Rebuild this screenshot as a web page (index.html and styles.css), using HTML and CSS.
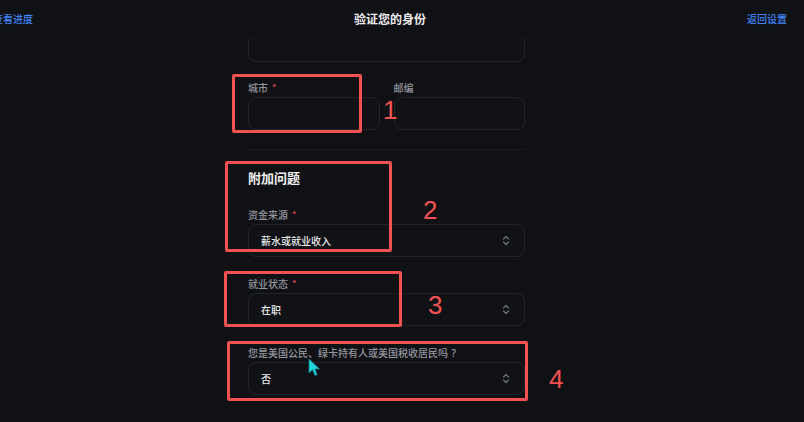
FILE: index.html
```html
<!DOCTYPE html>
<html lang="zh-CN">
<head>
<meta charset="utf-8">
<title>验证您的身份</title>
<link rel="stylesheet" href="styles.css">
</head>
<body>
<div class="page">
  <header class="topbar">
    <a class="link link-left" href="#">查看进度</a>
    <h1 class="title">验证您的身份</h1>
    <a class="link" href="#">返回设置</a>
  </header>
  <main class="main">
    <form class="form">
      <div class="field field-partial">
        <div class="input"></div>
      </div>
      <div class="row">
        <div class="field">
          <label class="label">城市<span class="req">*</span></label>
          <div class="input"></div>
        </div>
        <div class="field">
          <label class="label">邮编</label>
          <div class="input"></div>
        </div>
      </div>
      <hr class="divider">
      <h2 class="section">附加问题</h2>
      <div class="field">
        <label class="label">资金来源<span class="req">*</span></label>
        <div class="input select"><span class="value">薪水或就业收入</span>
          <svg class="chev" width="8" height="11" viewBox="0 0 8 11"><path d="M1.5 4 L4 1.5 L6.5 4 M1.5 7 L4 9.5 L6.5 7" fill="none" stroke="#6d7078" stroke-width="1.3" stroke-linecap="round" stroke-linejoin="round"/></svg>
        </div>
      </div>
      <div class="field">
        <label class="label">就业状态<span class="req">*</span></label>
        <div class="input select"><span class="value">在职</span>
          <svg class="chev" width="8" height="11" viewBox="0 0 8 11"><path d="M1.5 4 L4 1.5 L6.5 4 M1.5 7 L4 9.5 L6.5 7" fill="none" stroke="#6d7078" stroke-width="1.3" stroke-linecap="round" stroke-linejoin="round"/></svg>
        </div>
      </div>
      <div class="field">
        <label class="label">您是美国公民、绿卡持有人或美国税收居民吗<span class="qm">？</span></label>
        <div class="input select"><span class="value">否</span>
          <svg class="chev" width="8" height="11" viewBox="0 0 8 11"><path d="M1.5 4 L4 1.5 L6.5 4 M1.5 7 L4 9.5 L6.5 7" fill="none" stroke="#6d7078" stroke-width="1.3" stroke-linecap="round" stroke-linejoin="round"/></svg>
        </div>
      </div>
    </form>
  </main>

  <div class="mark mark-1"></div>
  <div class="mark mark-2"></div>
  <div class="mark mark-3"></div>
  <div class="mark mark-4"></div>
  <span class="num num-1">1</span>
  <span class="num num-2">2</span>
  <span class="num num-3">3</span>
  <span class="num num-4">4</span>
  <svg class="cursor" width="13" height="19" viewBox="0 0 13 19"><path d="M1 1 L1 15 L4.5 11.8 L7 17.5 L9.2 16.6 L6.8 11 L11.5 11 Z" fill="#23d9e0" stroke="#0e7f86" stroke-width="0.8" stroke-linejoin="round"/></svg>
</div>
</body>
</html>
```

FILE: styles.css
```css
* { box-sizing: border-box; }
html, body {
  margin: 0;
  padding: 0;
  background: #101115;
}
body {
  font-family: "Noto Sans CJK SC", "Noto Sans", sans-serif;
  color: #e6e7ea;
}
.page {
  position: relative;
  width: 804px;
  height: 422px;
  overflow: hidden;
}
.topbar {
  height: 39px;
  display: flex;
  align-items: center;
  justify-content: space-between;
  padding: 0 17px 0 0;
  border-bottom: 1px solid #131418;
  position: relative;
  z-index: 2;
  background: #101115;
}
.link {
  color: #3f84f4;
  font-size: 10px;
  font-weight: 500;
  text-decoration: none;
  line-height: 14px;
}
.link-left { margin-left: -7px; }
.title {
  margin: 0;
  font-size: 12px;
  font-weight: 600;
  color: #ececee;
  line-height: 16px;
}
.main {
  display: flex;
  justify-content: center;
  padding-right: 31px;
}
.form {
  width: 277px;
  display: flex;
  flex-direction: column;
}
.field {
  display: flex;
  flex-direction: column;
  margin-bottom: 20px;
}
.field-partial {
  margin-top: -10px;
  margin-bottom: 19px;
}
.row {
  display: grid;
  grid-template-columns: 1fr 1fr;
  column-gap: 14px;
}
.row .field { margin-bottom: 0; }
.label {
  font-size: 10px;
  line-height: 14px;
  color: #94969e;
  font-weight: 500;
  margin-bottom: 2px;
}
.qm {
  margin-left: 3px;
}
.req {
  color: #e5484d;
  margin-left: 4px;
  font-size: 9px;
  vertical-align: 1px;
}
.input {
  height: 33px;
  border: 1px solid #22242a;
  border-radius: 8px;
  background: #111216;
}
.select {
  display: flex;
  align-items: center;
  justify-content: space-between;
  padding: 0 14px 0 12px;
}
.value {
  font-size: 10px;
  color: #e9eaec;
  font-weight: 500;
}
.chev { display: block; }
.divider {
  border: 0;
  height: 1px;
  background: #1c1d22;
  margin: 19px 0 19px;
  width: 100%;
}
.section {
  margin: 0 0 21px;
  font-size: 13px;
  line-height: 18px;
  font-weight: 700;
  color: #f1f1f3;
}

/* annotation overlays */
.mark {
  position: absolute;
  border: 3px solid #f35252;
  border-radius: 2px;
  z-index: 5;
}
.mark-1 { left: 232px; top: 74px; width: 130px; height: 59px; }
.mark-2 { left: 225px; top: 161px; width: 167px; height: 91px; }
.mark-3 { left: 224px; top: 271px; width: 178px; height: 56px; }
.mark-4 { left: 227px; top: 341px; width: 301px; height: 60px; }
.num {
  position: absolute;
  font-family: "Liberation Sans", Arial, sans-serif;
  font-size: 26px;
  line-height: 1;
  color: #f35252;
  z-index: 5;
}
.num-1 { left: 383px; top: 97px; }
.num-2 { left: 423px; top: 197px; }
.num-3 { left: 428px; top: 292px; }
.num-4 { left: 549px; top: 366px; }
.cursor {
  position: absolute;
  left: 308px;
  top: 358px;
  z-index: 6;
}
```
